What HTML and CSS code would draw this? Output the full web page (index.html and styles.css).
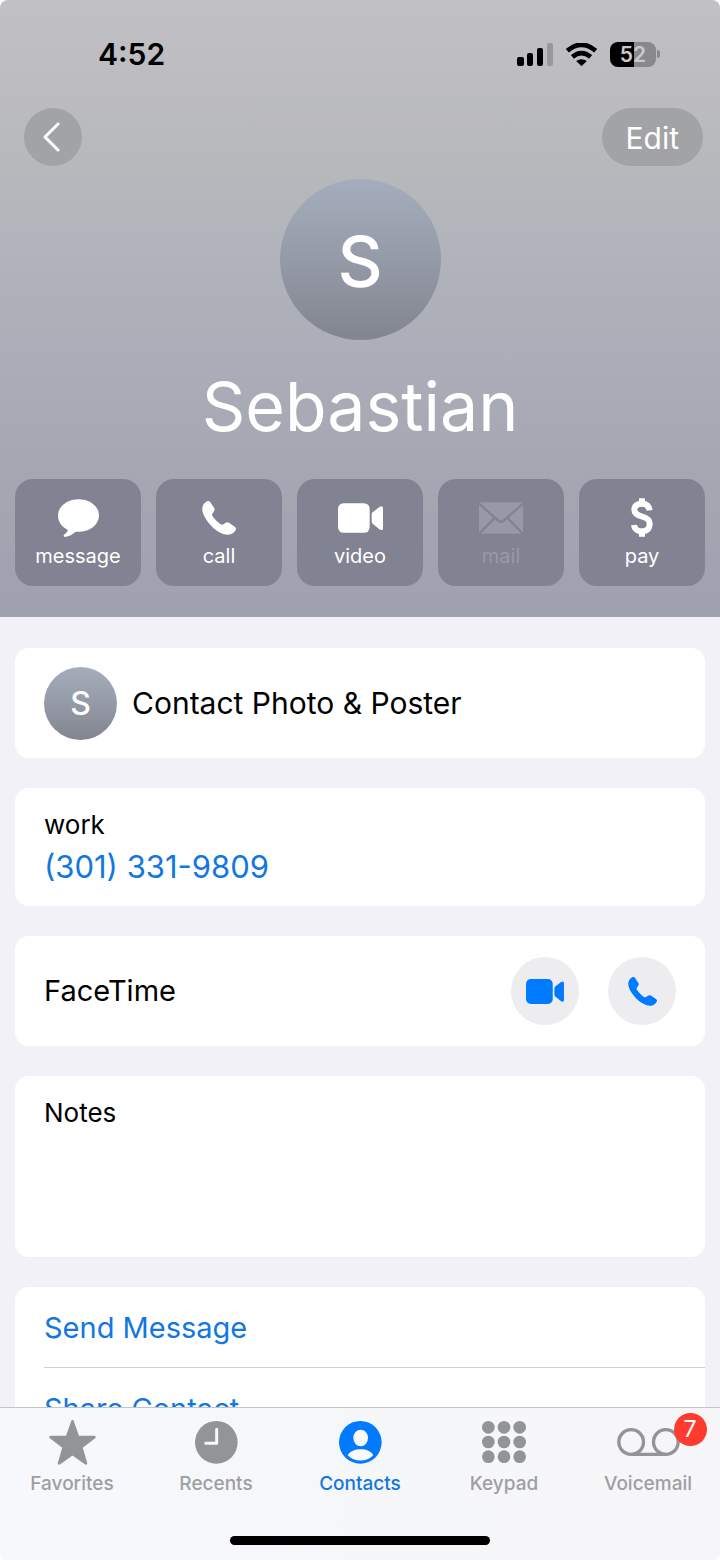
FILE: index.html
```html
<!DOCTYPE html>
<html lang="en">
<head>
<meta charset="utf-8">
<meta name="viewport" content="width=device-width, initial-scale=1">
<title>Sebastian</title>
<link rel="stylesheet" href="styles.css">
</head>
<body>
<svg class="sprite" aria-hidden="true">
  <symbol id="phone" viewBox="0 0 102 102"><path d="M1 20C3 10 9 4 15 1C20-1 23 1 26 5L36 20C39 25 38 28 35 32L31 38C29 41 30 43 32 46C38 56 47 64 56 70C59 72 61 72 64 70L70 66C74 63 77 63 82 66L98 77C102 80 103 83 101 87C97 95 89 101 79 101C62 102 38 88 22 68C8 50-1 34 1 20Z"/></symbol>
  <symbol id="video" viewBox="0 0 135 89"><rect width="95" height="89" rx="17"/><path d="M101 34Q101 30 104 27L125 11Q135 6 135 15V75Q135 84 125 79L104 62Q101 59 101 55Z"/></symbol>
</svg>
<div class="screen">
  <header class="hero">
    <div class="status">
      <time class="clock">4:52</time>
      <div class="indicators">
        <svg class="signal" viewBox="0 0 36 23" aria-hidden="true"><rect y="14" width="7" height="9" rx="2"/><rect x="10" y="10" width="6" height="13" rx="2"/><rect x="20" y="5" width="6" height="18" rx="2"/><rect class="faint" x="30" width="6" height="23" rx="2"/></svg>
        <svg class="wifi" viewBox="0 0 92 68" aria-hidden="true"><path class="arc" d="M4 23Q46-13 88 23M19 41Q46 19 73 41"/><path d="M30 53Q46 43 62 53L48 67Q46 69 44 67Z"/></svg>
        <div class="battery"><span class="level">52</span><i class="cap"></i></div>
      </div>
    </div>
    <nav class="topnav">
      <button class="back" aria-label="Back"><svg viewBox="0 0 18 30" aria-hidden="true"><path d="M16 2L3 15L16 28"/></svg></button>
      <button class="edit">Edit</button>
    </nav>
    <div class="avatar large">S</div>
    <h1 class="name">Sebastian</h1>
    <div class="actions">
      <button class="action"><span class="glyph"><svg class="i-message" viewBox="0 0 123 113" aria-hidden="true"><path d="M62 0C97 0 123 22 123 49S97 98 62 98C59 98 56 98 53 98C44 106 33 112 23 113C17 114 15 109 19 106C25 102 29 98 29 92C10 82 0 67 0 49C0 22 27 0 62 0Z"/></svg></span>message</button>
      <button class="action"><span class="glyph"><svg class="i-phone" aria-hidden="true"><use href="#phone"/></svg></span>call</button>
      <button class="action"><span class="glyph"><svg class="i-video" aria-hidden="true"><use href="#video"/></svg></span>video</button>
      <button class="action off" disabled><span class="glyph"><svg class="i-mail" viewBox="0 0 132 95" aria-hidden="true"><rect width="132" height="95" rx="7"/><path class="fold" d="M0 4L56 54Q66 63 76 54L132 4M0 95L46 48M132 95L86 48"/></svg></span>mail</button>
      <button class="action"><span class="glyph"><svg class="i-pay" viewBox="0 0 66 129" aria-hidden="true"><path d="M56 43C54 29 46 23 33 23C18 23 10 31 10 41C10 52 18 57 32 61C48 65 56 71 56 85C56 98 47 106 33 106C18 106 10 98 9 87"/><path d="M33 7V20M33 109V122"/></svg></span>pay</button>
    </div>
  </header>
  <main class="content">
    <section class="card poster"><div class="avatar small">S</div><span>Contact Photo &amp; Poster</span></section>
    <section class="card phone"><span class="label">work</span><a class="link" href="tel:+13013319809">(301) 331-9809</a></section>
    <section class="card facetime"><span>FaceTime</span>
      <div class="rounds">
        <button class="round" aria-label="FaceTime video"><svg class="r-video" aria-hidden="true"><use href="#video"/></svg></button>
        <button class="round" aria-label="FaceTime audio"><svg class="r-phone" aria-hidden="true"><use href="#phone"/></svg></button>
      </div>
    </section>
    <section class="card notes"><label class="label" for="notes">Notes</label><textarea id="notes"></textarea></section>
    <section class="card list">
      <button class="row link">Send Message</button>
      <button class="row link">Share Contact</button>
    </section>
  </main>
  <footer class="bottom">
    <nav class="tabs">
      <a class="tab" href="#favorites"><span class="tabicon"><svg class="t-star" viewBox="0 0 140 134" aria-hidden="true"><path d="M70 4L86 50L135 51L96 81L110 129L70 101L30 129L44 81L5 51L54 50Z"/></svg></span>Favorites</a>
      <a class="tab" href="#recents"><span class="tabicon"><svg class="t-round" viewBox="0 0 129 129" aria-hidden="true"><circle cx="64" cy="64" r="64"/><path class="hands" d="M65 25V67H32"/></svg></span>Recents</a>
      <a class="tab current" href="#contacts" aria-current="page"><span class="tabicon"><svg class="t-round" viewBox="0 0 129 129" aria-hidden="true"><circle cx="64" cy="64" r="64"/><g class="person"><ellipse cx="65" cy="51" rx="22" ry="25"/><path d="M26 103C34 90 48 85 65 85S96 90 103 103C84 124 45 124 26 103Z"/></g></svg></span>Contacts</a>
      <a class="tab" href="#keypad"><span class="tabicon"><svg class="t-keys" viewBox="0 0 132 126" aria-hidden="true"><circle cx="19" cy="19" r="19"/><circle cx="66" cy="19" r="19"/><circle cx="113" cy="19" r="19"/><circle cx="19" cy="63" r="19"/><circle cx="66" cy="63" r="19"/><circle cx="113" cy="63" r="19"/><circle cx="19" cy="107" r="19"/><circle cx="66" cy="107" r="19"/><circle cx="113" cy="107" r="19"/></svg></span>Keypad</a>
      <a class="tab" href="#voicemail"><span class="tabicon"><svg class="t-voice" viewBox="0 0 188 84" aria-hidden="true"><circle cx="42" cy="42" r="37"/><circle cx="146" cy="42" r="37"/><path d="M42 79H146"/></svg><b class="badge">7</b></span>Voicemail</a>
    </nav>
    <div class="homebar"></div>
  </footer>
</div>
</body>
</html>
```
FILE: styles.css
```css
* { box-sizing: border-box; }
body { margin: 0; background: #fff; color: #000; font-family: Inter, "Liberation Sans", sans-serif; font-size: 30px; line-height: 40px; }
button { margin: 0; padding: 0; border: 0; background: none; color: inherit; font: inherit; cursor: pointer; }
svg { display: block; fill: currentColor; }
.sprite { display: none; }
.screen { display: flex; flex-direction: column; height: 100vh; overflow: hidden; border-radius: 8px; background: #f2f1f7; }

.hero { flex: none; padding: 0 15px 31px; color: #fff; background: linear-gradient(#c1c1c5 0, #b7b8bc 28%, #b1b4bb 40%, #abadb8 58%, #a5a7b3 74%, #9fa1ae 100%); }
.status { display: flex; align-items: center; justify-content: space-between; height: 108px; padding: 0 45px 0 83px; color: #000; }
.clock { font-size: 30px; font-weight: 600; }
.indicators { display: flex; align-items: center; gap: 13px; }
.signal { width: 36px; height: 23px; }
.faint { fill: #98989c; }
.wifi { width: 31px; height: 23px; }
.arc { fill: none; stroke: currentColor; stroke-width: 14; }
.battery { display: flex; align-items: center; gap: 1px; }
.level { width: 46px; height: 25px; border-radius: 8px; background: linear-gradient(90deg, #000 52%, #88888d 52%); color: #c9c9cd; font-size: 21px; font-weight: 600; line-height: 25px; text-align: center; }
.cap { width: 3px; height: 8px; border-radius: 0 3px 3px 0; background: #88888d; }

.topnav { display: flex; justify-content: space-between; padding: 0 2px 0 9px; }
.back, .edit { display: flex; align-items: center; justify-content: center; height: 58px; border-radius: 29px; background: #a2a3a7; }
.back { width: 58px; padding-right: 4px; }
.back svg { width: 18px; height: 30px; fill: none; stroke: currentColor; stroke-width: 3; stroke-linecap: round; stroke-linejoin: round; }
.edit { padding: 2px 24px 0; }

.avatar { display: flex; align-items: center; justify-content: center; flex: none; border-radius: 50%; background: linear-gradient(#a5adbc, #949aa7 50%, #82858f); color: #fff; }
.large { width: 161px; height: 161px; margin: 13px auto 0; padding-top: 4px; font-size: 70px; font-weight: 500; }
.small { width: 73px; height: 73px; padding-top: 2px; font-size: 32px; font-weight: 500; }
.name { margin: 0; padding-bottom: 7px; font-size: 68px; font-weight: 400; line-height: 132px; text-align: center; }

.actions { display: grid; grid-template-columns: repeat(5, 1fr); gap: 15px; }
.action { display: flex; flex-direction: column; align-items: center; height: 107px; padding-top: 12px; border-radius: 18px; background: #818393; font-size: 20px; line-height: 24px; }
.glyph { display: flex; align-items: center; justify-content: center; height: 53px; }
.i-message { width: 41px; height: 38px; }
.i-phone { width: 34px; height: 34px; }
.i-video { width: 45px; height: 30px; }
.i-mail { width: 44px; height: 32px; }
.i-pay { width: 22px; height: 43px; fill: none; stroke: currentColor; stroke-width: 18; stroke-linejoin: round; }
.off { color: #9799a7; cursor: default; }
.fold { fill: none; stroke: #818393; stroke-width: 7; }

.content { flex: 1; min-height: 0; overflow: hidden; padding: 31px 15px 0; display: flex; flex-direction: column; gap: 30px; }
.card { flex: none; padding: 0 29px; border-radius: 14px; background: #fff; }
.poster { display: flex; align-items: center; gap: 15px; height: 110px; }
.phone { display: flex; flex-direction: column; align-items: flex-start; padding-top: 17px; padding-bottom: 17px; }
.label { font-size: 26px; }
.link { color: #1277e1; text-decoration: none; }
.phone .link { font-size: 31px; line-height: 44px; }
.facetime { display: flex; align-items: center; justify-content: space-between; height: 110px; font-size: 29px; }
.rounds { display: flex; gap: 29px; }
.round { display: flex; align-items: center; justify-content: center; width: 68px; height: 68px; border-radius: 50%; background: #ededf0; color: #007aff; }
.r-video { width: 38px; height: 25px; }
.r-phone { width: 29px; height: 29px; }
.notes { display: flex; flex-direction: column; height: 181px; padding-top: 17px; }
.notes textarea { flex: 1; width: 100%; border: 0; outline: 0; padding: 0; resize: none; font: inherit; background: none; }
.list { padding-right: 0; }
.row { display: block; width: 100%; height: 80px; padding-top: 2px; font-size: 29px; text-align: left; }
.row + .row { border-top: 1px solid #d0d0d3; }

.bottom { flex: none; border-top: 1px solid #c4c4c7; background: linear-gradient(90deg, #f6f8fb, #f6f6f8); padding-bottom: 15px; }
.tabs { display: grid; grid-template-columns: repeat(5, 1fr); }
.tab { display: flex; flex-direction: column; align-items: center; padding-top: 8px; color: #9d9fa3; font-size: 19px; font-weight: 500; line-height: 32px; text-decoration: none; }
.tabicon { position: relative; display: flex; align-items: center; justify-content: center; height: 52px; color: #929497; }
.t-star { width: 47px; height: 45px; stroke: currentColor; stroke-width: 8; stroke-linejoin: round; }
.t-round { width: 43px; height: 43px; }
.hands { fill: none; stroke: #f8f9fb; stroke-width: 9; stroke-linecap: round; stroke-linejoin: round; }
.person { fill: #f8f9fb; }
.t-keys { width: 44px; height: 42px; }
.t-voice { width: 63px; height: 28px; fill: none; stroke: currentColor; stroke-width: 10; }
.current { color: #1277e1; }
.current .tabicon { color: #007aff; }
.badge { position: absolute; top: -3px; right: -27px; width: 33px; height: 33px; border-radius: 50%; background: #ff3b30; color: #fff; font-size: 23px; font-weight: 400; line-height: 33px; text-align: center; }
.homebar { width: 36%; height: 9px; margin: 36px auto 0; border-radius: 5px; background: #000; }
```
